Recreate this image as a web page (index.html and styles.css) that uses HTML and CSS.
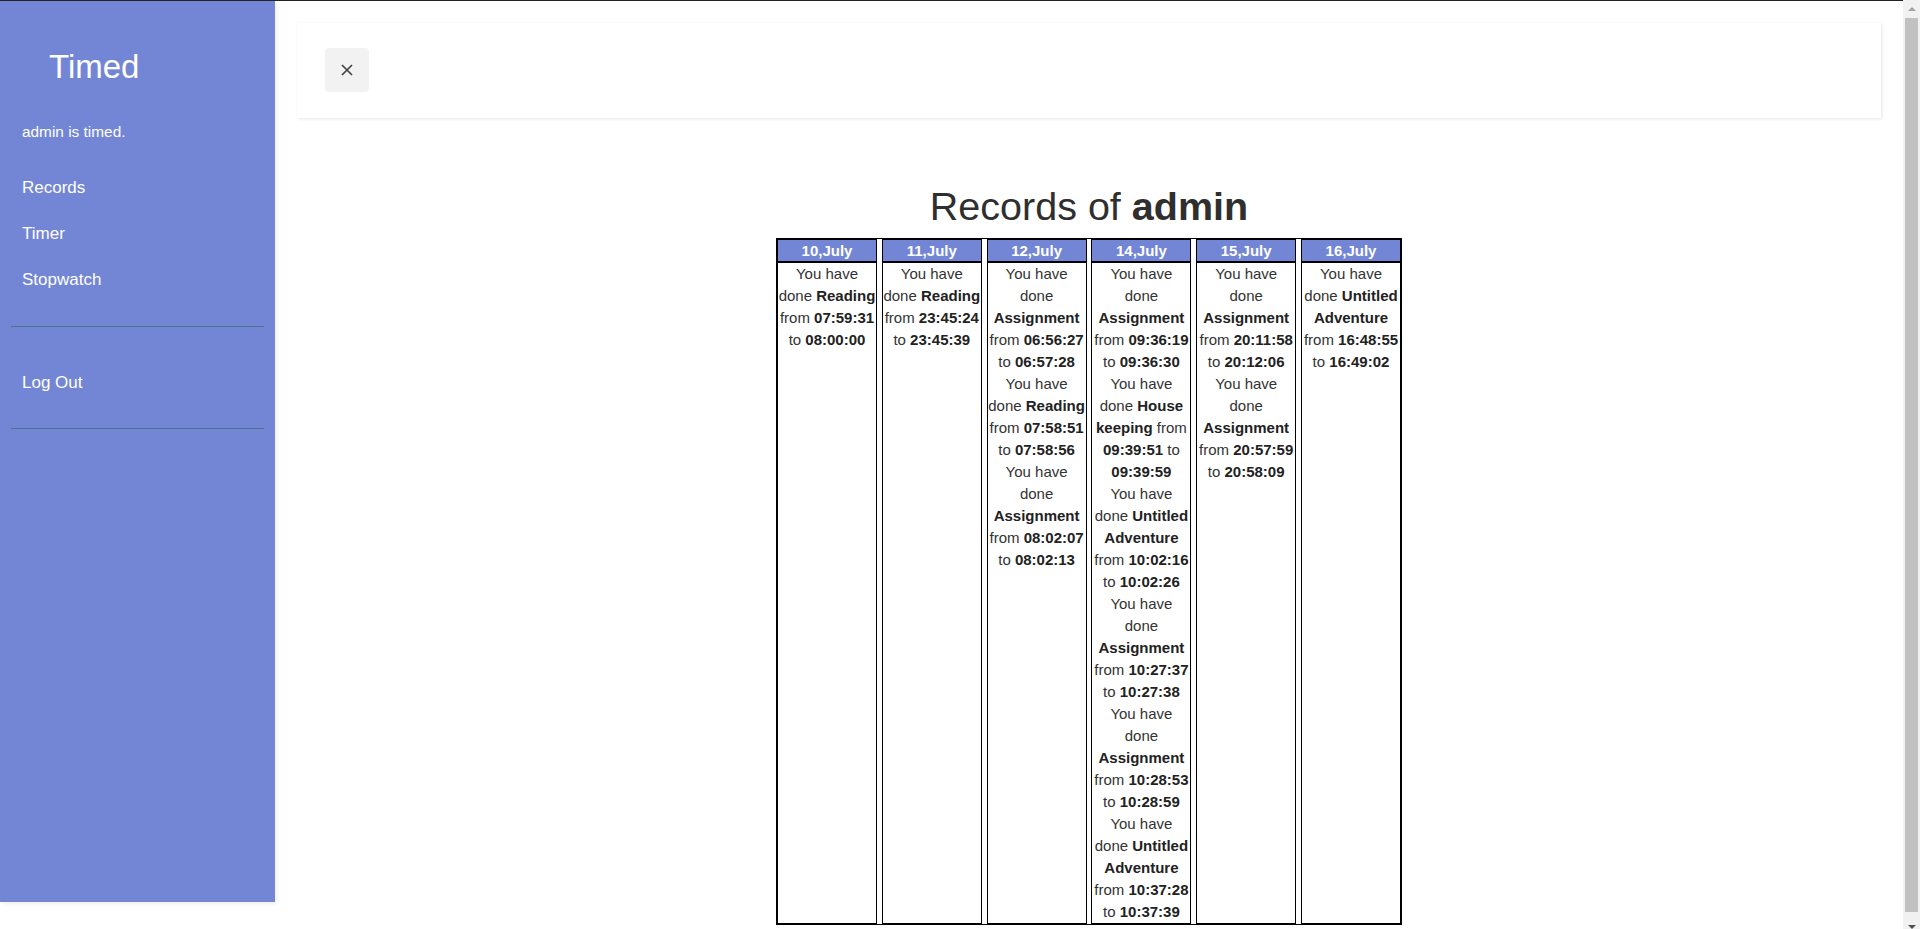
FILE: index.html
```html
<!DOCTYPE html>
<html lang="en">
<head>
<meta charset="utf-8">
<title>Timed - Records</title>
<link rel="stylesheet" href="styles.css">
</head>
<body>
<div class="page">
  <div class="wrapper">
    <nav class="sidebar">
      <h3 class="brand">Timed</h3>
      <p class="greeting">admin is timed.</p>
      <ul class="menu">
        <li><a href="#">Records</a></li>
        <li><a href="#">Timer</a></li>
        <li><a href="#">Stopwatch</a></li>
      </ul>
      <ul class="menu menu-bottom">
        <li><a href="#">Log Out</a></li>
      </ul>
    </nav>
    <main class="content">
      <div class="topbar">
        <button class="close-btn" type="button" aria-label="Close">
          <svg width="12" height="12" viewBox="0 0 12 12"><path d="M1 1 L11 11 M11 1 L1 11" stroke="#444" stroke-width="1.7" fill="none"/></svg>
        </button>
      </div>
      <h2 class="title">Records of <b>admin</b></h2>
      <div class="records">
        <div class="day">
          <div class="day-head">10,July</div>
          <div class="day-body">
            <div class="rec">You have done <b>Reading</b> from <b>07:59:31</b> to <b>08:00:00</b></div>
          </div>
        </div>
        <div class="day">
          <div class="day-head">11,July</div>
          <div class="day-body">
            <div class="rec">You have done <b>Reading</b> from <b>23:45:24</b> to <b>23:45:39</b></div>
          </div>
        </div>
        <div class="day">
          <div class="day-head">12,July</div>
          <div class="day-body">
            <div class="rec">You have done <b>Assignment</b> from <b>06:56:27</b> to <b>06:57:28</b></div>
            <div class="rec">You have done <b>Reading</b> from <b>07:58:51</b> to <b>07:58:56</b></div>
            <div class="rec">You have done <b>Assignment</b> from <b>08:02:07</b> to <b>08:02:13</b></div>
          </div>
        </div>
        <div class="day">
          <div class="day-head">14,July</div>
          <div class="day-body">
            <div class="rec">You have done <b>Assignment</b> from <b>09:36:19</b> to <b>09:36:30</b></div>
            <div class="rec">You have done <b>House keeping</b> from <b>09:39:51</b> to <b>09:39:59</b></div>
            <div class="rec">You have done <b>Untitled Adventure</b> from <b>10:02:16</b> to <b>10:02:26</b></div>
            <div class="rec">You have done <b>Assignment</b> from <b>10:27:37</b> to <b>10:27:38</b></div>
            <div class="rec">You have done <b>Assignment</b> from <b>10:28:53</b> to <b>10:28:59</b></div>
            <div class="rec">You have done <b>Untitled Adventure</b> from <b>10:37:28</b> to <b>10:37:39</b></div>
          </div>
        </div>
        <div class="day">
          <div class="day-head">15,July</div>
          <div class="day-body">
            <div class="rec">You have done <b>Assignment</b> from <b>20:11:58</b> to <b>20:12:06</b></div>
            <div class="rec">You have done <b>Assignment</b> from <b>20:57:59</b> to <b>20:58:09</b></div>
          </div>
        </div>
        <div class="day">
          <div class="day-head">16,July</div>
          <div class="day-body">
            <div class="rec">You have done <b>Untitled Adventure</b> from <b>16:48:55</b> to <b>16:49:02</b></div>
          </div>
        </div>
      </div>
    </main>
  </div>
</div>
<div class="scrollbar" aria-hidden="true">
  <div class="sb-btn sb-up"><span class="arrow-up"></span></div>
  <div class="sb-thumb"></div>
  <div class="sb-btn sb-down"><span class="arrow-down"></span></div>
</div>
</body>
</html>
```

FILE: styles.css
```css
* {
  box-sizing: border-box;
}

html {
  overflow: hidden;
}

body {
  margin: 0;
  display: flex;
  align-items: flex-start;
  font-family: "Liberation Sans", Arial, sans-serif;
  color: #333;
  background: #fff;
}

.page {
  flex: 1;
  min-width: 0;
  border-top: 1px solid #222;
}

.wrapper {
  display: flex;
  align-items: flex-start;
}

/* Sidebar */
.sidebar {
  flex: 0 0 275px;
  width: 275px;
  height: 901px;
  background: #7386d5;
  color: #fff;
  box-shadow: 2px 2px 4px rgba(0, 0, 0, 0.06);
}

.brand {
  margin: 47px 0 0;
  padding-left: 49px;
  font-size: 33px;
  line-height: 37px;
  font-weight: normal;
}

.greeting {
  margin: 38px 0 0;
  padding-left: 22px;
  font-size: 15.4px;
  line-height: 17px;
}

.menu {
  list-style: none;
  margin: 24.5px 11px 0;
  padding: 0 0 23.5px;
  border-bottom: 1px solid #47748b;
}

.menu li a {
  display: block;
  padding: 13px 0 13px 11px;
  font-size: 17px;
  line-height: 20px;
  color: #fff;
  text-decoration: none;
}

.menu-bottom {
  margin-top: 0;
  padding-top: 32.5px;
  padding-bottom: 22.5px;
}

/* Content */
.content {
  flex: 1;
  min-width: 0;
  padding: 22px 22px 18px;
}

.topbar {
  background: #fff;
  padding: 25px 28px 26px;
  box-shadow: 1px 1px 3px rgba(0, 0, 0, 0.1);
  display: flex;
  align-items: center;
}

.close-btn {
  width: 44px;
  height: 44px;
  border: none;
  border-radius: 4px;
  background: #f2f2f2;
  display: flex;
  align-items: center;
  justify-content: center;
  padding: 0;
}

.title {
  margin: 66px 0 0;
  text-align: center;
  font-size: 39.5px;
  line-height: 45px;
  font-weight: normal;
  color: #2f2f2f;
}

.title b {
  font-weight: bold;
}

.records {
  width: 626px;
  margin: 9px auto 0;
  border: 1px solid #000;
  display: flex;
  justify-content: space-between;
  align-items: stretch;
}

.day {
  width: 100px;
  border: 1px solid #000;
  display: flex;
  flex-direction: column;
}

.day-head {
  background: #7386d5;
  color: #fff;
  font-weight: bold;
  font-size: 15px;
  line-height: 21px;
  text-align: center;
  border-bottom: 2px solid #000;
}

.day-body {
  flex: 1;
  font-size: 15px;
  line-height: 22px;
  text-align: center;
  color: #333;
}

.day-body b {
  color: #222;
}

/* Window scrollbar */
.scrollbar {
  flex: 0 0 17px;
  width: 17px;
  height: 929px;
  background: #f1f1f1;
  display: flex;
  flex-direction: column;
}

.sb-btn {
  height: 17px;
  display: flex;
  justify-content: center;
}

.sb-up {
  align-items: center;
}

.sb-down {
  align-items: flex-start;
  padding-top: 13px;
}

.arrow-up {
  width: 0;
  height: 0;
  border-left: 4px solid transparent;
  border-right: 4px solid transparent;
  border-bottom: 4px solid #a3a3a3;
}

.arrow-down {
  width: 0;
  height: 0;
  border-left: 4px solid transparent;
  border-right: 4px solid transparent;
  border-top: 4px solid #505050;
}

.sb-thumb {
  flex: 1;
  margin: 1px 2px 0;
  background: #c1c1c1;
}
```
